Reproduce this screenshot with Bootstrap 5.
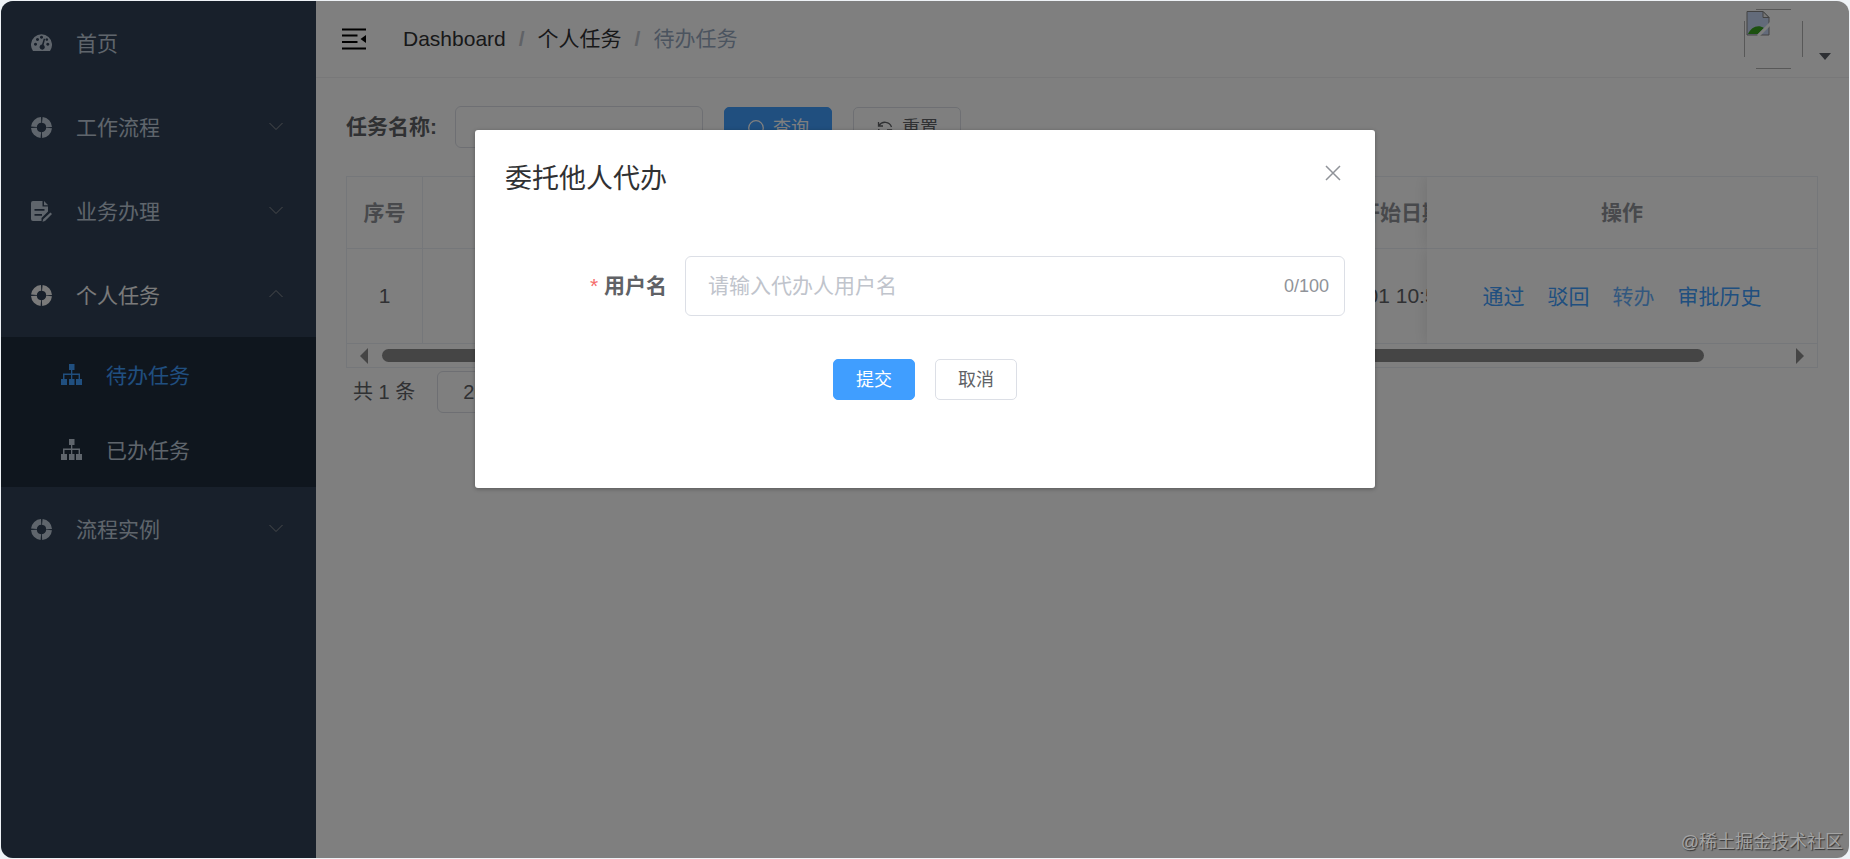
<!DOCTYPE html>
<html lang="zh-CN">
<head>
<meta charset="utf-8">
<meta name="viewport" content="width=device-width, initial-scale=1">
<title>待办任务</title>
<link href="https://cdn.jsdelivr.net/npm/bootstrap@5.3.0/dist/css/bootstrap.min.css" rel="stylesheet">
<style>
  body { font-family: "Liberation Sans", "Noto Sans CJK SC", sans-serif; font-size: 21px; line-height: 30px; background: #eef2f6; color: #606266; }
  a { text-decoration: none; }
  .shell { height: 100vh; padding: 1px; }
  .frame { border-radius: 12px; background: #fff; }

  /* sidebar */
  .side { width: 315px; background: #304156; }
  .side a { color: #bfcbd9; height: 84px; padding: 2px 32px 0 30px; display: flex; align-items: center; gap: 24px; }
  .side a.opened { color: #f4f4f5; }
  .side .sub { background: #1f2d3d; }
  .side .sub a { height: 75px; padding-left: 60px; }
  .side .sub a.current { color: #409eff; }
  .side .glyph { width: 21px; height: 21px; fill: currentColor; flex: none; margin-bottom: 2px; }
  .side .chev { width: 16px; height: 16px; margin-left: auto; margin-bottom: 4px; fill: none; stroke: #909399; }

  /* top bar */
  .topbar { height: 77px; border-bottom: 1px solid #f0f1f3; padding: 0 18px 0 26px; }
  .crumbs { gap: 13px; margin-left: 37px; }
  .crumbs .sep { color: #c0c4cc; font-weight: 700; }
  .crumbs a { color: #303133; }
  .crumbs .here { color: #97a8be; }

  /* query form and buttons */
  .workarea { padding: 28px 31px 0 30px; }
  .field { border: 1px solid #dcdfe6; border-radius: 6px; box-shadow: none; }
  .query { gap: 21px; }
  .query .field { width: 248px; height: 42px; }
  .query label { width: 109px; font-weight: 700; }
  .ctl { height: 41px; font-size: 18px; line-height: 24px; border-radius: 5px; padding: 2px 22px 0; border: 1px solid #dcdfe6; color: #606266; background: #fff; }
  .ctl.main { background: #409eff; border-color: #409eff; color: #fff; }
  .ctl svg { width: 18px; height: 18px; fill: none; stroke: currentColor; stroke-width: 1.300; }

  /* table */
  .grid-box { border: 1px solid #ebeef5; margin-top: 28px; }
  .grid-tbl { table-layout: fixed; width: 100%; border-collapse: separate; border-spacing: 0; }
  .grid-tbl th, .grid-tbl td { border-right: 1px solid #ebeef5; border-bottom: 1px solid #ebeef5; text-align: center; white-space: nowrap; overflow: hidden; padding: 0; }
  .grid-tbl th { height: 72px; color: #909399; }
  .grid-tbl td { height: 95px; }
  .grid-tbl .clip { border-right: 0; }
  .grid-tbl .clip > div { width: 286px; }
  .grid-tbl .pinned { overflow: visible; border-right: 0; box-shadow: 0 0 15px rgba(0,0,0,.12); clip-path: inset(0 0 0 -15px); }
  .ops { gap: 23px; padding-top: 2px; }
  .ops a { color: #409eff; }
  .ops a.hovered { color: #66b1ff; }
  .hbar { height: 23px; padding: 0 13px; gap: 14px; }
  .hbar svg { width: 8px; height: 16px; fill: #8a8a8a; }
  .hbar .thumb { width: 94.4%; height: 13px; border-radius: 7px; background: #8b8b8b; }
  .pager { font-size: 20px; padding: 3px 7px; gap: 22px; }
  .pager .field { width: 150px; height: 42px; padding: 0 0 0 21px; font-size: 20px; color: #606266; }

  /* dialog */
  .veil { position: absolute; inset: 0; background: rgba(0,0,0,.5); padding-top: 15vh; z-index: 5; }
  .dlg { width: 900px; max-width: 96%; min-height: 358px; background: #fff; border-radius: 3px; box-shadow: 0 1px 4px rgba(0,0,0,.3); padding: 31px 30px 30px; }
  .dlg h1 { font-size: 27px; line-height: 36px; color: #303133; margin: 0; }
  .dlg .shut { border: 0; background: none; padding: 0; width: 24px; height: 24px; line-height: 1; }
  .dlg .shut svg { width: 24px; height: 24px; stroke: #909399; stroke-width: 1.500; display: block; }
  .dlg .entry { margin-top: 59px; }
  .dlg label { width: 180px; padding-right: 18px; text-align: right; font-weight: 700; }
  .dlg .field { height: 60px; padding: 0 15px 0 22px; }
  .dlg .field input { border: 0; outline: 0; padding: 0; min-width: 0; background: none; }
  .dlg .field input::placeholder { color: #c0c4cc; }
  .dlg .count { font-size: 18px; color: #909399; }
  .dlg .acts { margin-top: 43px; gap: 20px; }
  .star { color: #f56c6c; font-weight: 400; }
  .credit { position: absolute; right: 6px; bottom: 1px; font-size: 18px; line-height: 30px; color: #a3a3a3; text-shadow: 1px 1px 1px #333; z-index: 6; }
</style>
</head>
<body>
<svg width="0" height="0" class="position-absolute" aria-hidden="true">
  <symbol id="ring" viewBox="0 0 21 21"><circle cx="10.500" cy="10.500" r="7.600" fill="none" stroke="currentColor" stroke-width="5.800" stroke-dasharray="10.700 1.238" stroke-dashoffset="-.619"/></symbol>
  <symbol id="tree" viewBox="0 0 21 21"><path d="M8 0h5.500v6H11.300v3.500H19V15h2v6h-6v-6h2.600v-4H11.300v4h2.200v6H8v-6h2v-4H3.500v4H6v6H0v-6h2V9.500h8V6H8z"/></symbol>
  <symbol id="down" viewBox="0 0 16 16"><path d="M1.500 5 8 11.500 14.500 5"/></symbol>
</svg>
<div class="shell">
  <div class="frame d-flex h-100 position-relative overflow-hidden">
    <nav class="side flex-shrink-0">
      <a href="#"><svg class="glyph" viewBox="0 0 21 21"><path fill-rule="evenodd" d="M2 18A10.500 10.500 0 1 1 19 18zM4.500 9.800a1.500 1.500 0 1 0 .01 0zM6.500 5a1.500 1.500 0 1 0 .01 0zM10.500 2.800a1.500 1.500 0 1 0 .01 0zM16.800 9.800a1.500 1.500 0 1 0 .01 0zM12.800 5.500 11 11.500a2.600 2.600 0 1 0 1.600.4l1.500-6zM15.800 5.200a1.300 1.300 0 1 0 .01 0z"/></svg>首页</a>
      <a href="#"><svg class="glyph"><use href="#ring"/></svg>工作流程<svg class="chev"><use href="#down"/></svg></a>
      <a href="#"><svg class="glyph" viewBox="0 0 21 21"><path fill-rule="evenodd" d="M2 0h9.500v5.500H17v5l-6.500 6.500v3H2a2 2 0 0 1-2-2V2a2 2 0 0 1 2-2zM3.500 8v1.800h10V8zM3.500 13v1.800h7.500V13zM13 0l4.200 4.200H13zM19.500 11.500 21 13l-7 7-2.500.8.700-2.500z"/></svg>业务办理<svg class="chev"><use href="#down"/></svg></a>
      <a href="#" class="opened"><svg class="glyph"><use href="#ring"/></svg>个人任务<svg class="chev" viewBox="0 0 16 16"><path d="M1.500 11 8 4.500 14.500 11"/></svg></a>
      <div class="sub">
        <a href="#" class="current"><svg class="glyph"><use href="#tree"/></svg>待办任务</a>
        <a href="#"><svg class="glyph"><use href="#tree"/></svg>已办任务</a>
      </div>
      <a href="#"><svg class="glyph"><use href="#ring"/></svg>流程实例<svg class="chev"><use href="#down"/></svg></a>
    </nav>

    <main class="flex-grow-1 overflow-hidden">
      <header class="topbar d-flex align-items-center">
        <svg width="24" height="22" viewBox="0 0 24 22"><path d="M0 1.500h24M0 7.500h15.500M0 14h15.500M0 20.500h24" stroke="#000" stroke-width="2"/><path d="M24 7v8l-5.500-4z"/></svg>
        <nav class="crumbs d-flex" aria-label="breadcrumb">
          <a href="#">Dashboard</a><span class="sep">/</span><a href="#">个人任务</a><span class="sep">/</span><span class="here">待办任务</span>
        </nav>
        <div class="ms-auto d-flex align-items-end gap-3">
          <svg width="60" height="60" viewBox="0 0 60 60" fill="none">
            <path d="M13 .5h35M13 59.500h35M1.500 12v36M59.500 12v36" stroke="#b0b0b0"/>
            <path d="M4 2.500h16l6 6V26H4z" fill="#c7d6f5" stroke="#858585"/>
            <path d="M20 2.500v6h6z" fill="#eee" stroke="#858585"/>
            <path d="M5 25c3-7 10-10 16-6l-6 6z" fill="#39a31f"/>
            <path d="M15 27 28 14" stroke="#fff" stroke-width="3"/>
          </svg>
          <svg class="mb-2" width="12" height="8" viewBox="0 0 12 8"><path d="M0 0h12L6 7z" fill="#5a5e66"/></svg>
        </div>
      </header>

      <section class="workarea">
        <form class="query d-flex align-items-center">
          <div class="d-flex align-items-center">
            <label for="task">任务名称:</label>
            <input id="task" class="field" type="text">
          </div>
          <button type="button" class="ctl main d-flex align-items-center gap-2"><svg viewBox="0 0 18 18"><circle cx="9" cy="9" r="7.300"/><path d="m14 14 3 3"/></svg>查询</button>
          <button type="button" class="ctl d-flex align-items-center gap-2"><svg viewBox="0 0 18 18"><path d="M2.500 3v4H7M3 6.500A7 7 0 0 1 15.500 8M15.500 15v-4H11M15 11.500A7 7 0 0 1 2.500 10"/></svg>重置</button>
        </form>

        <div class="grid-box">
          <table class="grid-tbl">
            <colgroup><col style="width:76px"><col><col style="width:190px"><col style="width:390px"></colgroup>
            <thead><tr><th>序号</th><th></th><th class="clip"><div>任务开始日期</div></th><th class="pinned">操作</th></tr></thead>
            <tbody><tr>
              <td>1</td><td></td><td class="clip"><div>2022-12-01 10:55:20</div></td>
              <td class="pinned"><div class="ops d-flex justify-content-center"><a href="#">通过</a><a href="#">驳回</a><a href="#" class="hovered">转办</a><a href="#">审批历史</a></div></td>
            </tr></tbody>
          </table>
          <div class="hbar d-flex align-items-center">
            <svg viewBox="0 0 8 16"><path d="M8 0v16L0 8z"/></svg>
            <div class="flex-grow-1"><div class="thumb"></div></div>
            <svg viewBox="0 0 8 16"><path d="M0 0v16l8-8z"/></svg>
          </div>
        </div>
        <div class="pager d-flex align-items-center">
          <span>共 1 条</span>
          <select class="field bg-white" aria-label="每页条数"><option>20条/页</option></select>
        </div>
      </section>
    </main>

    <div class="veil">
      <div class="dlg mx-auto" role="dialog" aria-labelledby="dlg-title">
        <div class="d-flex justify-content-between align-items-start">
          <h1 id="dlg-title" class="fw-normal">委托他人代办</h1>
          <button type="button" class="shut" aria-label="关闭"><svg viewBox="0 0 24 24"><path d="m5 5 14 14M19 5 5 19"/></svg></button>
        </div>
        <form>
          <div class="entry d-flex align-items-center">
            <label for="user"><span class="star">*</span> 用户名</label>
            <div class="field d-flex align-items-center flex-grow-1">
              <input id="user" class="flex-grow-1" type="text" maxlength="100" placeholder="请输入代办人用户名">
              <span class="count">0/100</span>
            </div>
          </div>
          <div class="acts d-flex justify-content-center">
            <button type="button" class="ctl main">提交</button>
            <button type="button" class="ctl">取消</button>
          </div>
        </form>
      </div>
    </div>
    <div class="credit">@稀土掘金技术社区</div>
  </div>
</div>
<script src="https://cdn.jsdelivr.net/npm/bootstrap@5.3.0/dist/js/bootstrap.bundle.min.js"></script>
</body>
</html>
